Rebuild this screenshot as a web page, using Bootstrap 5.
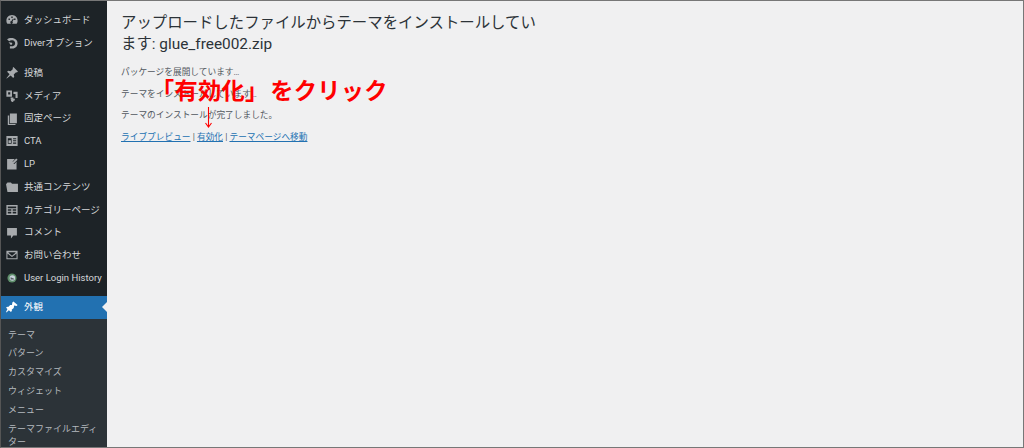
<!DOCTYPE html>
<html lang="ja">
<head>
  <meta charset="UTF-8">
  <title>テーマのインストール</title>
  <link href="https://cdn.jsdelivr.net/npm/bootstrap@5.3.0/dist/css/bootstrap.min.css" rel="stylesheet">
  <style>
    html, body { height: 100%; overflow: hidden; }
    body { font-family: Roboto, "Noto Sans CJK JP", sans-serif; background: #f0f0f1; }
    .frame { width: 1024px; height: 448px; border: 1px solid #777; border-left-color: #555; overflow: hidden; background: #f0f0f1; }
    .side { width: 106px; background: #1d2327; flex: none; }
    .side-list { padding-top: 8px; flex: none; }
    .side-item { height: 22.8px; font-size: 9.5px; color: #d6d8da; white-space: nowrap; padding-left: 4px; gap: 5px; flex: none; }
    .side-item svg { width: 14px; height: 14px; fill: #a7aaad; flex: none; }
    .side-gap { height: 7px; }
    .side-current { background: #2271b1; color: #fff; margin-top: 6px; position: relative; height: 23px; }
    .side-current svg { fill: #fff; }
    .side-current::after { content: ""; position: absolute; right: 0; top: 6px; border: 5.5px solid transparent; border-right-color: #f0f0f1; border-left-width: 0; }
    .side-sub { background: #2c3338; padding-top: 7px; flex-grow: 1; }
    .side-sub div { font-size: 9px; line-height: 13px; color: #b4b9be; padding: 3px 6px 2.8px 7px; }
    .main-area { position: relative; padding: 12px 0 0 14px; }
    .inst-title { font-size: 15.4px; line-height: 21px; font-weight: 400; color: #2c3338; width: 430px; margin: 0 0 11px; }
    .inst-line { font-size: 8.7px; line-height: 13px; color: #50575e; margin: 0 0 8.6px; }
    .inst-line a { color: #2271b1; }
    .note-text { position: absolute; left: 44px; top: 73px; font-size: 23.2px; line-height: 30px; font-weight: 700; color: #f00; white-space: nowrap; font-family: "Noto Sans CJK JP", sans-serif; letter-spacing: .3px; }
    .note-arrow { position: absolute; left: 97px; top: 106px; width: 9px; height: 21px; }
  </style>
</head>
<body>
<div class="frame d-flex">
  <div class="side d-flex flex-column">
    <div class="side-list">
      <div class="side-item d-flex align-items-center"><svg viewBox="0 0 20 20"><path fill-rule="evenodd" d="M10 3C5 3 2 7 2 11c0 2 .6 3.500 1.500 4.500h13c.9-1 1.500-2.500 1.500-4.500 0-4-3-8-8-8zM9 5h2v2H9zM5 8h2v2H5zm8 0h2v2h-2zm-1.500 0L12.500 9l-1.800 3.200a1.800 1.800 0 1 1-1.500-.6z"/></svg>ダッシュボード</div>
      <div class="side-item d-flex align-items-center"><svg viewBox="0 0 20 20"><path d="M3 5c2-2 5-2.500 8-2 4 .7 7 3.500 7 7.500S15 18 11 18H7v-3.500h4c2.200 0 3.500-2 3.500-4S13 6.500 10.500 6.200C8.500 6 7 6.500 6 7.500zM5 9l5 .5c1 1.500 0 3-1.500 3-1.200 0-1.500-1-1.800-1.800z"/></svg>Diverオプション</div>
      <div class="side-gap"></div>
      <div class="side-item d-flex align-items-center"><svg viewBox="0 0 20 20"><path d="M12 1.500l6.500 6.500-1.500 1.200-1.200-.4-3.300 3.300.7 3.400-1.500 1.500-3.600-3.600L2.500 18l-.5-.5 4.500-5.700L3 8.300l1.500-1.500 3.500.7 3.300-3.300-.4-1.300z"/></svg>投稿</div>
      <div class="side-item d-flex align-items-center"><svg viewBox="0 0 20 20"><path fill-rule="evenodd" d="M2 2h8v9H2zm2.500 2.500v3.500h3V4.500zM12 4h6v9h-3V7h-3zM8 12h4v2h2v2.500h-1.500a2 2 0 1 1-3.500-1.500H8z"/></svg>メディア</div>
      <div class="side-item d-flex align-items-center"><svg viewBox="0 0 20 20"><path d="M7 2h10v14H7zM4 5h2v12h9v1.500H4z"/></svg>固定ページ</div>
      <div class="side-item d-flex align-items-center"><svg viewBox="0 0 20 20"><path fill-rule="evenodd" d="M2 3h16v14H2zm2 3v8h5.500V6zm7.500 0v1.500H16V6zm0 3v1.500H16V9zm0 3v2H16v-2zM5 9h3.500v4H5z"/></svg>CTA</div>
      <div class="side-item d-flex align-items-center"><svg viewBox="0 0 20 20"><path d="M3 3h11l-3 3.500-1 4 4-1 2.500-3V18H3zM16 2l2 2-6.500 6.500-2.500.6.600-2.600z"/></svg>LP</div>
      <div class="side-item d-flex align-items-center"><svg viewBox="0 0 20 20"><path d="M1.500 6l2-2.500h5L10 5.500h8.500V17h-15z"/></svg>共通コンテンツ</div>
      <div class="side-item d-flex align-items-center"><svg viewBox="0 0 20 20"><path fill-rule="evenodd" d="M2 3h16v14H2zm2 2v2.500h12V5zm0 4v2h5V9zm7 0v2h5V9zM4 12.500V15h5v-2.500zm7 0V15h5v-2.500z"/></svg>カテゴリーページ</div>
      <div class="side-item d-flex align-items-center"><svg viewBox="0 0 20 20"><path d="M3 3h14v10.500h-5L8.500 18v-4.500H3z"/></svg>コメント</div>
      <div class="side-item d-flex align-items-center"><svg viewBox="0 0 20 20"><path fill-rule="evenodd" d="M2 4h16v12H2zm2.500 2.500L10 11l5.500-4.500-1.500-.5H6zM3.500 8v6.500h13V8L10 13z"/></svg>お問い合わせ</div>
      <div class="side-item d-flex align-items-center"><svg viewBox="0 0 20 20"><circle cx="10" cy="10" r="6.500" fill="#5f8f6b"/><circle cx="10.500" cy="10" r="4" fill="#c9d2dc"/><path d="M8 9l5 2v1H8z" fill="#555d63"/></svg>User Login History</div>
    </div>
    <div class="side-item side-current d-flex align-items-center"><svg viewBox="0 0 20 20"><path d="M12 2l6 5-1.500 1.500L13 8l-.5 3.500L9.500 14l.5 1.500-1.500 1.500-3-2.500L2 18l-.5-1 2-4-2-2 1.500-1.500 1.500.5 3-3L10 7l.5-3.500z"/></svg>外観</div>
    <div class="side-sub">
      <div>テーマ</div>
      <div>パターン</div>
      <div>カスタマイズ</div>
      <div>ウィジェット</div>
      <div>メニュー</div>
      <div>テーマファイルエディター</div>
    </div>
  </div>
  <div class="main-area flex-grow-1">
    <h1 class="inst-title">アップロードしたファイルからテーマをインストールしています: glue_free002.zip</h1>
    <p class="inst-line">パッケージを展開しています…</p>
    <p class="inst-line">テーマをインストールしています…</p>
    <p class="inst-line">テーマのインストールが完了しました。</p>
    <p class="inst-line"><a href="#">ライブプレビュー</a> | <a href="#">有効化</a> | <a href="#">テーマページへ移動</a></p>
    <div class="note-text">「有効化」&#8202;をクリック</div>
    <svg class="note-arrow" viewBox="0 0 9 21"><path d="M4.500 0v20M1.500 16l3 4 3-4" fill="none" stroke="#f00" stroke-width="1.100"/></svg>
  </div>
</div>
<script src="https://cdn.jsdelivr.net/npm/bootstrap@5.3.0/dist/js/bootstrap.bundle.min.js"></script>
</body>
</html>
